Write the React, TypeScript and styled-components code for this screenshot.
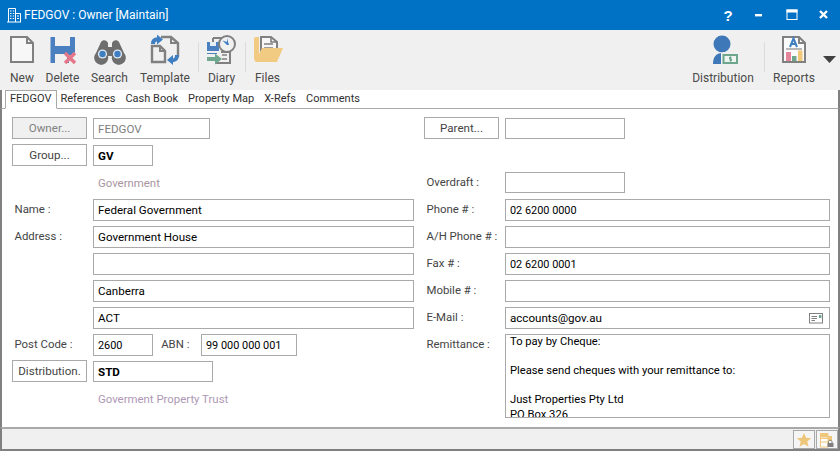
import React from 'react'
import styled, { createGlobalStyle } from 'styled-components'

const GlobalStyle = createGlobalStyle`
  html, body {
    margin: 0;
    padding: 0;
    background: #fff;
  }
  * {
    box-sizing: border-box;
  }
`

const NewIcon = () => (
  <svg width="32" height="32" viewBox="0 0 32 32" fill="none">
    <path d="M5 3H21L27 9V28H5Z" stroke="#808080" strokeWidth="2" fill="#f7f7f7" />
    <path d="M21 3V9H27" stroke="#808080" strokeWidth="2" />
  </svg>
)

const DeleteIcon = () => (
  <svg width="32" height="32" viewBox="0 0 32 32">
    <path d="M3.5 3H28V21H22V29H3.5Z" fill="#4a7fc0" />
    <rect x="8" y="3" width="15" height="9" fill="#f0f0f0" />
    <rect x="8" y="20" width="12" height="9" fill="#f0f0f0" />
    <path d="M18 19L28 29M28 19L18 29" stroke="#e5778a" strokeWidth="3.4" />
  </svg>
)

const SearchIcon = () => (
  <svg width="32" height="32" viewBox="0 0 32 32">
    <path d="M7 8C9 5 13 6 14 9V13H18V9C19 6 23 5 25 8L30 19A7 7 0 1 1 18 22H14A7 7 0 1 1 2 19Z" fill="#6e6e6e" />
    <circle cx="8.5" cy="20" r="4.6" fill="#dfe8f2" />
    <circle cx="23.5" cy="20" r="4.6" fill="#dfe8f2" />
    <circle cx="8.5" cy="20" r="3.2" fill="#3f7fc1" />
    <circle cx="23.5" cy="20" r="3.2" fill="#3f7fc1" />
  </svg>
)

const TemplateIcon = () => (
  <svg width="32" height="32" viewBox="0 0 32 32" fill="none">
    <path d="M12 3H22L29 9V23" stroke="#808080" strokeWidth="2.4" />
    <path d="M22 3V9H29" stroke="#808080" strokeWidth="2" />
    <path d="M3 12H11L16 17V28H3Z" stroke="#808080" strokeWidth="2.4" fill="#f0f0f0" />
    <path d="M11 12V17H16" stroke="#808080" strokeWidth="2" />
    <path d="M2 10C2 5 5 3.5 8 3.5V0.5L14 5.5L8 10.5V7.5C6.5 7.5 6 8.5 6 10Z" fill="#3f7fc1" />
    <path d="M30 21C30 26 27 28 24 28V31L18 26L24 21V24.5C25.5 24.5 26 23 26 21Z" fill="#3f7fc1" />
  </svg>
)

const DiaryIcon = () => (
  <svg width="32" height="32" viewBox="0 0 32 32" fill="none">
    <path d="M1 8H13V17H1Z" fill="#4a7fc0" />
    <rect x="4" y="8" width="6" height="4" fill="#e8eef5" />
    <path d="M7 4H16M7 4V8" stroke="#808080" strokeWidth="2" />
    <path d="M15 18H24V29H9" stroke="#808080" strokeWidth="2" />
    <path d="M16 21H21M16 25H21" stroke="#808080" strokeWidth="1.6" />
    <path d="M1 19H11V20H1Z" fill="#4a7fc0" />
    <circle cx="21" cy="10" r="8" fill="#f0f0f0" stroke="#808080" strokeWidth="2" />
    <path d="M21 11L16.5 6.5L21 8V4L23 11Z" fill="#3f7fc1" />
    <path d="M1 23H9V19.5L16 25L9 30.5V27H1Z" fill="#6fa88f" />
  </svg>
)

const FilesIcon = () => (
  <svg width="32" height="32" viewBox="0 0 32 32" fill="none">
    <path d="M2 5C2 3.5 3 3 4 3H7V27H4C3 27 2 26 2 25Z" fill="#f2cb83" />
    <path d="M9 3H19L25 8V17H9Z" fill="#f7f7f7" stroke="#808080" strokeWidth="2" />
    <path d="M19 3V8H25M12 10H21M12 14H21" stroke="#808080" strokeWidth="1.6" />
    <path d="M10 14H31L25 28H3Z" fill="#f2cb83" />
  </svg>
)

const DistributionIcon = () => (
  <svg width="32" height="32" viewBox="0 0 32 32">
    <circle cx="15" cy="10" r="8.5" fill="#3f78b8" />
    <path d="M6 30C6 23 9 19 15 19C21 19 24 22 24 30Z" fill="#3f78b8" />
    <rect x="14" y="18.5" width="18" height="12" fill="#f0f0f0" />
    <rect x="15.5" y="20" width="15.5" height="10" fill="#6da58d" />
    <rect x="17.5" y="22" width="11.5" height="6" fill="#eef4f0" />
    <path d="M24.5 23.3H22.5V25H24.5V26.7H22.5M23.5 22.5V27.5" stroke="#5f9880" strokeWidth="0.9" fill="none" />
  </svg>
)

const ReportsIcon = () => (
  <svg width="32" height="32" viewBox="0 0 32 32" fill="none">
    <path d="M5 3H21L27 9V28H5Z" stroke="#808080" strokeWidth="2" fill="#fbfbfb" />
    <path d="M21 3V9H27" stroke="#808080" strokeWidth="2" />
    <path d="M12 13L15.5 4.5L19 13M13.5 10H17.5" stroke="#3f7fc1" strokeWidth="2" />
    <path d="M8 15H24" stroke="#9a9a9a" strokeWidth="1.4" />
    <rect x="8" y="18" width="5" height="9" fill="#e5859b" />
    <rect x="14" y="22" width="4.5" height="5" fill="#6da58d" />
    <rect x="20" y="16.5" width="4.5" height="10.5" fill="#f0c878" />
  </svg>
)

const BuildingIcon = () => (
  <svg width="16" height="16" viewBox="0 0 16 16" fill="none" stroke="#fff" strokeWidth="1">
    <path d="M2.5 15V1.5H9.5V15" />
    <path d="M9.5 6.5H14.5V15" />
    <path d="M1 15H15" />
    <path d="M4 4H5.5M6.8 4H8.2M4 6.5H5.5M6.8 6.5H8.2M4 9H5.5M6.8 9H8.2M4 11.5H5.5M6.8 11.5H8.2M11 9H13M11 11.5H13" />
  </svg>
)

const MinIcon = () => (
  <svg width="12" height="12" viewBox="0 0 12 12">
    <rect x="1" y="5" width="7" height="2.4" fill="#fff" />
  </svg>
)

const MaxIcon = () => (
  <svg width="12" height="12" viewBox="0 0 12 12" fill="none" stroke="#fff">
    <rect x="1" y="1" width="10" height="9.5" strokeWidth="1" />
    <rect x="1" y="1" width="10" height="2" fill="#fff" strokeWidth="1" />
  </svg>
)

const CloseIcon = () => (
  <svg width="12" height="12" viewBox="0 0 12 12">
    <path d="M2 2L9 9M9 2L2 9" stroke="#fff" strokeWidth="2.4" />
  </svg>
)

const CardIcon = () => (
  <svg width="15" height="11" viewBox="0 0 15 11" fill="none">
    <rect x="0.5" y="0.5" width="13" height="9.5" stroke="#808080" />
    <path d="M2.5 3.5H8M2.5 5.5H8M2.5 7.5H6" stroke="#808080" />
    <rect x="10" y="2" width="2.4" height="3" fill="#6da58d" />
  </svg>
)

const StarIcon = () => (
  <svg width="16" height="16" viewBox="0 0 16 16">
    <path d="M8 1L10.1 5.8L15.2 6.2L11.3 9.6L12.5 14.8L8 12L3.5 14.8L4.7 9.6L0.8 6.2L5.9 5.8Z" fill="#eec77a" />
  </svg>
)

const LockListIcon = () => (
  <svg width="16" height="16" viewBox="0 0 16 16" fill="none">
    <path d="M1.5 1.5H9V15H1.5Z" fill="#fff" stroke="#eec77a" />
    <rect x="1.5" y="1.5" width="7.5" height="4" fill="#eec77a" />
    <rect x="1.5" y="6.5" width="7.5" height="3.5" fill="#fff" stroke="#eec77a" />
    <rect x="9" y="4" width="4" height="5" fill="#eec77a" />
    <path d="M9.5 11V9.8C9.5 7.8 13 7.8 13 9.8V11" stroke="#808080" />
    <rect x="8.5" y="11" width="6" height="4" fill="#808080" />
  </svg>
)

const Window = styled.div`
  display: flex;
  flex-direction: column;
  width: 840px;
  height: 451px;
  overflow: hidden;
  background: #fff;
  font-family: Roboto, "Noto Sans", "Liberation Sans", sans-serif;
  font-size: 11.4px;
  color: #444;
`

const TitleBar = styled.div`
  display: flex;
  align-items: center;
  flex: 0 0 30px;
  padding-left: 6px;
  background: #0072c6;
  color: #fff;
`

const TitleText = styled.span`
  margin-left: 2px;
  font-size: 12px;
  color: #fff;
`

const WindowButtons = styled.div`
  display: flex;
  align-items: center;
  margin-left: auto;
`

const WindowButton = styled.span<{ $w: number }>`
  display: flex;
  align-items: center;
  justify-content: center;
  width: ${(p) => p.$w}px;
  height: 30px;
  font-family: "Liberation Sans", sans-serif;
  font-size: 15px;
  font-weight: 700;
`

const Toolbar = styled.div`
  display: flex;
  flex: 0 0 60px;
  padding-left: 4px;
  background: #f0f0f0;
`

const ToolButton = styled.div<{ $w: number }>`
  display: flex;
  flex-direction: column;
  align-items: center;
  flex: 0 0 ${(p) => p.$w}px;
  padding-top: 4px;
  white-space: nowrap;
`

const ToolLabel = styled.span`
  margin-top: 4px;
  line-height: 16px;
  font-size: 12px;
  color: #4a4a4a;
`

const ToolSeparator = styled.div`
  flex: 0 0 1px;
  height: 30px;
  margin: 12px 1px 0 2px;
  background: #dcdcdc;
`

const ToolbarRight = styled.div`
  display: flex;
  margin-left: auto;
`

const MoreArrow = styled.div`
  flex: 0 0 13px;
  height: 7px;
  margin: 26px 4px 0 1px;
  background: #404040;
  clip-path: polygon(0 0, 100% 0, 50% 100%);
`

const TabBar = styled.div`
  display: flex;
  flex: 0 0 19px;
  min-height: 0;
  align-items: flex-start;
  padding-left: 5px;
  background: #fff;
  border-bottom: 1px solid #a9a9a9;
  border-left: 2px solid #808080;
  border-right: 2px solid #808080;
`

const Tab = styled.div<{ $active?: boolean }>`
  flex: 0 0 auto;
  height: 19px;
  padding: 0 ${(p) => (p.$active ? '4px' : '5px')};
  margin: ${(p) => (p.$active ? '0 -1px 0 -2px' : '0')};
  border: ${(p) => (p.$active ? '1px solid #a9a9a9' : '0 none')};
  border-bottom-color: #fff;
  line-height: ${(p) => (p.$active ? '16px' : '18px')};
  font-size: 11px;
  color: #303030;
  white-space: nowrap;
`

const Form = styled.div`
  display: grid;
  grid-template-columns: 402px 406px;
  column-gap: 10px;
  flex: 1 1 0;
  min-height: 0;
  padding: 9px 8px 0 10px;
  border-left: 2px solid #808080;
  border-right: 2px solid #808080;
  overflow: hidden;
`

const Column = styled.div`
  display: flex;
  flex-direction: column;
  gap: 5px;
`

const Row = styled.div`
  display: flex;
  flex: 0 0 22px;
  align-items: flex-start;
`

const ActionButton = styled.button<{ $disabled?: boolean }>`
  flex: 0 0 75px;
  height: 22px;
  margin: -1px 6px 0 0;
  padding: 0;
  border: 1px solid #a9a9a9;
  background: ${(p) => (p.$disabled ? '#f0f0f0' : '#fff')};
  color: ${(p) => (p.$disabled ? '#808080' : '#444')};
  font-family: inherit;
  font-size: 11.6px;
  white-space: nowrap;
  overflow: hidden;
`

const Label = styled.label<{ $w?: number }>`
  flex: 0 0 ${(p) => p.$w ?? 81}px;
  padding-left: 2.5px;
  line-height: 21px;
  white-space: nowrap;
  color: #444;
`

const FieldText = styled.input<{ $w?: number; $bold?: boolean; $short?: boolean; $dim?: boolean; $digits?: boolean }>`
  flex: ${(p) => (p.$w ? `0 0 ${p.$w}px` : '1')};
  width: ${(p) => (p.$w ? `${p.$w}px` : 'auto')};
  min-width: 0;
  height: ${(p) => (p.$short ? 21 : 22)}px;
  padding: 0 4px;
  border: 1px solid #a9a9a9;
  border-radius: 0;
  outline: none;
  background: #fff;
  font-family: inherit;
  font-size: ${(p) => (p.$digits ? 10.9 : 11.6)}px;
  font-weight: ${(p) => (p.$bold ? 700 : 400)};
  color: ${(p) => (p.$dim ? '#808080' : '#000')};
`

const Caption = styled.div<{ $color: string }>`
  margin-left: 86px;
  padding-top: 1px;
  line-height: 20px;
  color: ${(p) => p.$color};
`

const FieldWrap = styled.div`
  position: relative;
  display: flex;
  flex: 1;
`

const FieldIcon = styled.span`
  position: absolute;
  top: 6px;
  right: 6px;
  display: flex;
`

const Memo = styled.textarea`
  flex: 1;
  height: 84px;
  padding: 0 4px;
  border: 1px solid #a9a9a9;
  border-radius: 0;
  outline: none;
  overflow: hidden;
  resize: none;
  font-family: inherit;
  font-size: 11.2px;
  line-height: 14.6px;
  color: #000;
`

const StatusBar = styled.div`
  display: flex;
  flex: 0 0 24px;
  justify-content: flex-end;
  gap: 1px;
  padding: 1px 0 0;
  background: #f0f0f0;
  border: 2px solid #a9a9a9;
  border-left-color: #808080;
  border-right-color: #808080;
  border-bottom-color: #808080;
`

const StatusButton = styled.div`
  display: flex;
  align-items: center;
  justify-content: center;
  width: 22px;
  height: 19px;
  border: 1px solid #a9a9a9;
  background: #f5f5f5;
`

const tools = [
  { label: 'New', w: 36, icon: <NewIcon /> },
  { label: 'Delete', w: 45, icon: <DeleteIcon /> },
  { label: 'Search', w: 49, icon: <SearchIcon /> },
  { label: 'Template', w: 62, icon: <TemplateIcon /> },
]

const tabs = ['FEDGOV', 'References', 'Cash Book', 'Property Map', 'X-Refs', 'Comments']

const remittance = `To pay by Cheque:

Please send cheques with your remittance to:

Just Properties Pty Ltd
PO Box 326
Canberra ACT 2600`

export default function App() {
  return (
    <Window>
      <GlobalStyle />
      <TitleBar>
        <BuildingIcon />
        <TitleText>FEDGOV : Owner [Maintain]</TitleText>
        <WindowButtons>
          <WindowButton $w={32}>?</WindowButton>
          <WindowButton $w={32}><MinIcon /></WindowButton>
          <WindowButton $w={32}><MaxIcon /></WindowButton>
          <WindowButton $w={32}><CloseIcon /></WindowButton>
        </WindowButtons>
      </TitleBar>

      <Toolbar>
        {tools.map((tool) => (
          <ToolButton key={tool.label} $w={tool.w}>
            {tool.icon}
            <ToolLabel>{tool.label}</ToolLabel>
          </ToolButton>
        ))}
        <ToolSeparator />
        <ToolButton $w={43}>
          <DiaryIcon />
          <ToolLabel>Diary</ToolLabel>
        </ToolButton>
        <ToolSeparator />
        <ToolButton $w={41}>
          <FilesIcon />
          <ToolLabel>Files</ToolLabel>
        </ToolButton>
        <ToolbarRight>
          <ToolButton $w={78}>
            <DistributionIcon />
            <ToolLabel>Distribution</ToolLabel>
          </ToolButton>
          <ToolSeparator />
          <ToolButton $w={56}>
            <ReportsIcon />
            <ToolLabel>Reports</ToolLabel>
          </ToolButton>
          <MoreArrow />
        </ToolbarRight>
      </Toolbar>

      <TabBar>
        {tabs.map((tab, i) => (
          <Tab key={tab} $active={i === 0}>{tab}</Tab>
        ))}
      </TabBar>

      <Form>
        <Column>
          <Row>
            <ActionButton $disabled>Owner...</ActionButton>
            <FieldText $w={117} $short $dim readOnly value="FEDGOV" />
          </Row>
          <Row>
            <ActionButton>Group...</ActionButton>
            <FieldText $w={60} $short $bold readOnly value="GV" />
          </Row>
          <Row>
            <Caption $color="#a8959f">Government</Caption>
          </Row>
          <Row>
            <Label>Name :</Label>
            <FieldText readOnly value="Federal Government" />
          </Row>
          <Row>
            <Label>Address :</Label>
            <FieldText readOnly value="Government House" />
          </Row>
          <Row>
            <Label />
            <FieldText readOnly value="" />
          </Row>
          <Row>
            <Label />
            <FieldText readOnly value="Canberra" />
          </Row>
          <Row>
            <Label />
            <FieldText readOnly value="ACT" />
          </Row>
          <Row>
            <Label>Post Code :</Label>
            <FieldText $w={60} $digits readOnly value="2600" />
            <Label $w={48}>&nbsp;&nbsp;ABN :</Label>
            <FieldText $w={96} $digits readOnly value="99 000 000 001" />
          </Row>
          <Row>
            <ActionButton>Distribution.</ActionButton>
            <FieldText $w={120} $short $bold readOnly value="STD" />
          </Row>
          <Row>
            <Caption $color="#ae98b4">Goverment Property Trust</Caption>
          </Row>
        </Column>

        <Column>
          <Row>
            <ActionButton>Parent...</ActionButton>
            <FieldText $w={120} $short readOnly value="" />
          </Row>
          <Row />
          <Row>
            <Label>Overdraft :</Label>
            <FieldText $w={120} $short readOnly value="" />
          </Row>
          <Row>
            <Label>Phone # :</Label>
            <FieldText $digits readOnly value="02 6200 0000" />
          </Row>
          <Row>
            <Label>A/H Phone # :</Label>
            <FieldText readOnly value="" />
          </Row>
          <Row>
            <Label>Fax # :</Label>
            <FieldText $digits readOnly value="02 6200 0001" />
          </Row>
          <Row>
            <Label>Mobile # :</Label>
            <FieldText readOnly value="" />
          </Row>
          <Row>
            <Label>E-Mail :</Label>
            <FieldWrap>
              <FieldText readOnly value="accounts@gov.au" />
              <FieldIcon><CardIcon /></FieldIcon>
            </FieldWrap>
          </Row>
          <Row>
            <Label>Remittance :</Label>
            <Memo readOnly value={remittance} />
          </Row>
        </Column>
      </Form>

      <StatusBar>
        <StatusButton><StarIcon /></StatusButton>
        <StatusButton><LockListIcon /></StatusButton>
      </StatusBar>
    </Window>
  )
}
